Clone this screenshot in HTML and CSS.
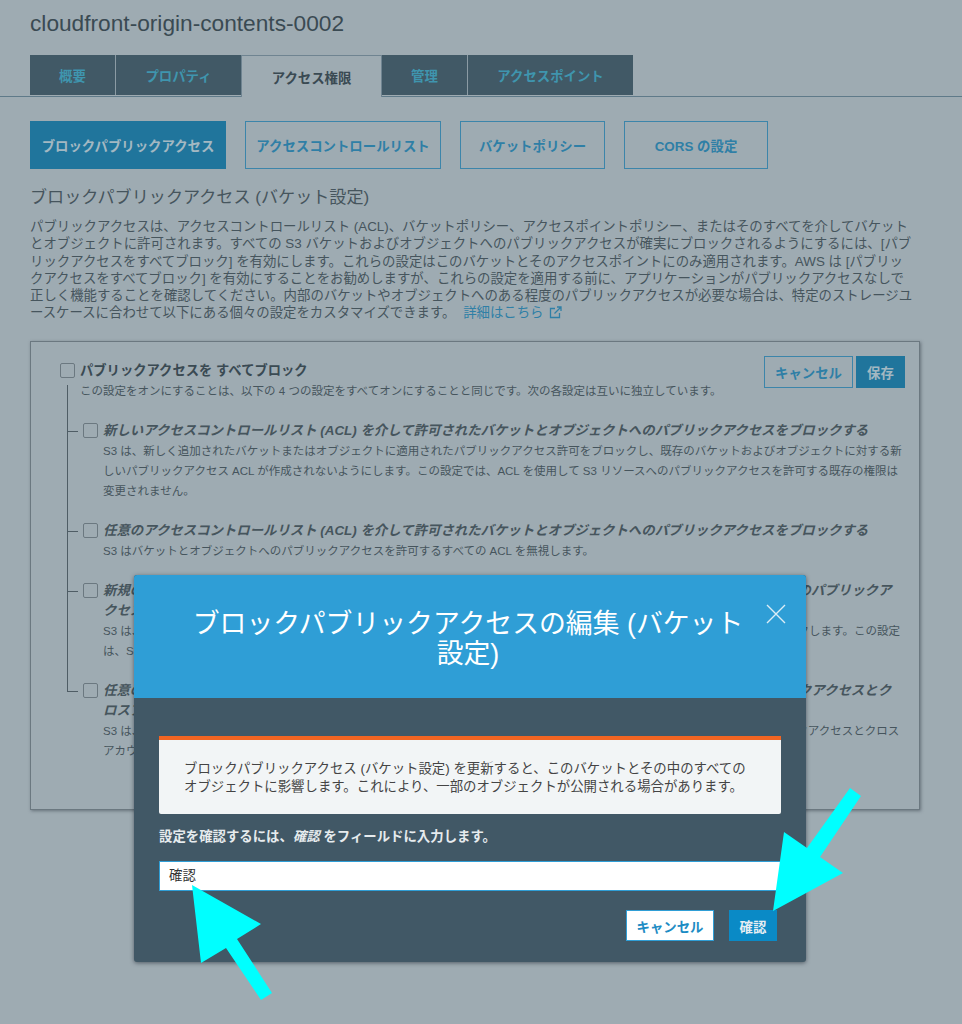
FILE: index.html
```html
<!DOCTYPE html>
<html lang="ja">
<head>
    <meta charset="UTF-8">
    <title>cloudfront-origin-contents-0002</title>
    <link rel="stylesheet" href="styles.css">
</head>
<body>

<h1 class="bucket-name">cloudfront-origin-contents-0002</h1>

<div class="tabs">
    <a class="tab tab-overview">概要</a>
    <a class="tab tab-props">プロパティ</a>
    <a class="tab tab-active">アクセス権限</a>
    <a class="tab tab-manage">管理</a>
    <a class="tab tab-points">アクセスポイント</a>
</div>

<div class="subnav">
    <a class="pill pill-active pill-block">ブロックパブリックアクセス</a>
    <a class="pill pill-acl">アクセスコントロールリスト</a>
    <a class="pill pill-policy">バケットポリシー</a>
    <a class="pill pill-cors">CORS の設定</a>
</div>

<h2 class="section-title">ブロックパブリックアクセス (バケット設定)</h2>
<p class="intro">
    パブリックアクセスは、アクセスコントロールリスト (ACL)、バケットポリシー、アクセスポイントポリシー、またはそのすべてを介してバケット<br>
    とオブジェクトに許可されます。すべての S3 バケットおよびオブジェクトへのパブリックアクセスが確実にブロックされるようにするには、[パブ<br>
    リックアクセスをすべてブロック] を有効にします。これらの設定はこのバケットとそのアクセスポイントにのみ適用されます。AWS は [パブリッ<br>
    クアクセスをすべてブロック] を有効にすることをお勧めしますが、これらの設定を適用する前に、アプリケーションがパブリックアクセスなしで<br>
    正しく機能することを確認してください。内部のバケットやオブジェクトへのある程度のパブリックアクセスが必要な場合は、特定のストレージユ<br>
    ースケースに合わせて以下にある個々の設定をカスタマイズできます。
    <a class="more-link">詳細はこちら
        <svg class="ext-icon" width="13" height="13" viewBox="0 0 13 13" fill="none" stroke="#2f7fa6" stroke-width="1.3">
            <path d="M6 2.5H1.5V11.5H10.5V7"/>
            <path d="M5.5 7.5L12 1M8 1H12V5"/>
        </svg>
    </a>
</p>

<div class="settings">
    <div class="top-row">
        <div class="top-text">
            <div class="row-head">
                <span class="check"></span>
                <span class="top-title">パブリックアクセスを すべてブロック</span>
            </div>
            <p class="top-desc">この設定をオンにすることは、以下の 4 つの設定をすべてオンにすることと同じです。次の各設定は互いに独立しています。</p>
        </div>
        <div class="top-actions">
            <a class="btn btn-outline">キャンセル</a>
            <a class="btn btn-save">保存</a>
        </div>
    </div>

    <div class="tree">
        <div class="tree-row">
            <div class="row-head">
                <span class="check"></span>
                <span class="row-title">新しいアクセスコントロールリスト (ACL) を介して許可されたバケットとオブジェクトへのパブリックアクセスをブロックする</span>
            </div>
            <p class="row-desc">S3 は、新しく追加されたバケットまたはオブジェクトに適用されたパブリックアクセス許可をブロックし、既存のバケットおよびオブジェクトに対する新<br>しいパブリックアクセス ACL が作成されないようにします。この設定では、ACL を使用して S3 リソースへのパブリックアクセスを許可する既存の権限は<br>変更されません。</p>
        </div>
        <div class="tree-row">
            <div class="row-head">
                <span class="check"></span>
                <span class="row-title">任意のアクセスコントロールリスト (ACL) を介して許可されたバケットとオブジェクトへのパブリックアクセスをブロックする</span>
            </div>
            <p class="row-desc">S3 はバケットとオブジェクトへのパブリックアクセスを許可するすべての ACL を無視します。</p>
        </div>
        <div class="tree-row">
            <div class="row-head">
                <span class="check"></span>
                <span class="row-title">新規のパブリックバケットポリシーまたはアクセスポイントポリシーを介して許可されたバケットとオブジェクトへのパブリックア<br>クセスをブロックする</span>
            </div>
            <p class="row-desc">S3 は、バケットとオブジェクトへのパブリックアクセスを許可する新しいバケットポリシーおよびアクセスポイントポリシーをブロックします。この設定<br>は、S3 リソースへのパブリックアクセスを許可する既存のポリシーは変更しません。</p>
        </div>
        <div class="tree-row">
            <div class="row-head">
                <span class="check"></span>
                <span class="row-title">任意のパブリックバケットポリシーまたはアクセスポイントポリシーを介したバケットとオブジェクトへのパブリックアクセスとク<br>ロスアカウントアクセスをブロックする</span>
            </div>
            <p class="row-desc">S3 は、バケットとオブジェクトへのパブリックアクセスを許可するポリシーを持つバケットやアクセスポイントへのすべてのパブリックアクセスとクロス<br>アカウントアクセスを無視します。</p>
        </div>
    </div>
</div>

<div class="modal">
    <div class="modal-head">
        <h3 class="modal-title">ブロックパブリックアクセスの編集 (バケット設定)</h3>
        <svg class="modal-close" width="20" height="20" viewBox="0 0 20 20" stroke="#dcedf6" stroke-width="1.4">
            <path d="M1 1L19 19M19 1L1 19"/>
        </svg>
    </div>
    <div class="modal-body">
        <div class="alert">ブロックパブリックアクセス (バケット設定) を更新すると、このバケットとその中のすべての<br>オブジェクトに影響します。これにより、一部のオブジェクトが公開される場合があります。</div>
        <p class="confirm-label">設定を確認するには、<em>確認</em> をフィールドに入力します。</p>
        <div class="confirm-input">確認</div>
        <div class="modal-actions">
            <a class="btn-modal btn-modal-cancel">キャンセル</a>
            <a class="btn-modal btn-modal-ok">確認</a>
        </div>
    </div>
</div>

<svg class="arrows" width="962" height="1024" viewBox="0 0 962 1024" fill="#00ffff">
    <polygon points="192,885 261,924 237,939 272,993 261,1000 226,948 201,963"/>
    <polygon points="773,911 784,832 807,848 850,788 861,796 820,857 843,873"/>
</svg>

</body>
</html>
```

FILE: styles.css
```css
body {
    font-family: "Liberation Sans", "Noto Sans CJK JP", sans-serif;
    position: relative;
    height: 1024px;
    margin: 0;
    overflow: hidden;
    background-color: #9eabb2;
    color: #46555d;
}
.bucket-name {
    margin: 0;
    padding: 12px 0 0 30px;
    height: 55px;
    box-sizing: border-box;
    font-size: 22.7px;
    line-height: 23px;
    font-weight: normal;
    color: #3a4a53;
}
.tabs {
    display: flex;
    height: 42px;
    box-sizing: border-box;
    padding-left: 30px;
    border-bottom: 1px solid #5f7a89;
}
.tab {
    display: flex;
    justify-content: center;
    align-items: center;
    box-sizing: border-box;
    height: 40px;
    border-left: 1px solid #8b9ba4;
    background-color: #415966;
    color: #3f95ae;
    font-size: 13.4px;
    font-weight: bold;
}
.tab-overview { width: 85px; border-left: none; }
.tab-props { width: 126px; }
.tab-active {
    width: 141px;
    height: 42px;
    background-color: #9eabb2;
    border: 1px solid #6f8491;
    border-bottom: none;
    color: #3a4a53;
}
.tab-manage { width: 85px; border-left: none; }
.tab-points { width: 166px; }
.subnav {
    display: flex;
    padding: 24px 0 0 30px;
}
.pill {
    display: flex;
    justify-content: center;
    align-items: center;
    box-sizing: border-box;
    height: 48px;
    border: 1px solid #3c85aa;
    color: #2f7fa6;
    font-size: 13.4px;
    font-weight: bold;
}
.pill-active {
    background-color: #20759c;
    border-color: #20759c;
    color: #a3b8c2;
}
.pill-block { width: 196px; margin-right: 19px; }
.pill-acl { width: 196px; margin-right: 19px; }
.pill-policy { width: 145px; margin-right: 19px; }
.pill-cors { width: 144px; }
.section-title {
    margin: 18px 0 0 30px;
    font-size: 17.1px;
    line-height: 22px;
    font-weight: normal;
    color: #46555d;
}
.intro {
    margin: 9px 0 0 30px;
    font-size: 13.4px;
    line-height: 17.3px;
    white-space: nowrap;
    color: #46555d;
}
.more-link {
    margin-left: 4px;
    color: #2f7fa6;
}
.ext-icon {
    margin-left: 2px;
    vertical-align: -2px;
}
.settings {
    box-sizing: border-box;
    width: 890px;
    height: 469px;
    margin: 19px 0 0 30px;
    padding: 14px 14px 0 29px;
    border: 1px solid #6b7880;
    box-shadow: 1px 1px 3px rgba(50, 60, 70, 0.5);
}
.top-row {
    display: flex;
    justify-content: space-between;
}
.top-text {
    padding-top: 5px;
}
.row-head {
    display: flex;
    align-items: center;
    min-height: 20px;
}
.check {
    flex-shrink: 0;
    box-sizing: border-box;
    width: 15px;
    height: 15px;
    margin-right: 5px;
    border: 1px solid #6b7880;
    border-radius: 2px;
}
.top-title {
    font-size: 13.3px;
    font-weight: bold;
    line-height: 20px;
    color: #3a4a53;
}
.top-desc {
    margin: 0 0 0 20px;
    font-size: 11.5px;
    line-height: 20px;
}
.top-actions {
    display: flex;
    gap: 3px;
}
.btn {
    display: flex;
    justify-content: center;
    align-items: center;
    box-sizing: border-box;
    height: 32px;
    font-size: 13.4px;
    font-weight: bold;
}
.btn-outline {
    width: 89px;
    border: 1px solid #3c85aa;
    color: #2f7fa6;
}
.btn-save {
    width: 49px;
    background-color: #20759c;
    color: #a3b8c2;
}
.tree {
    margin: 20px 0 0 7px;
}
.tree-row {
    position: relative;
    padding: 0 0 20px 16px;
}
.tree-row::before {
    content: "";
    position: absolute;
    left: 0;
    top: 0;
    bottom: 0;
    border-left: 1px solid #4f5d65;
}
.tree-row:first-child::before {
    top: -36px;
}
.tree-row:last-child::before {
    bottom: auto;
    height: 10px;
}
.tree-row::after {
    content: "";
    position: absolute;
    left: 0;
    top: 10px;
    width: 11px;
    border-top: 1px solid #4f5d65;
}
.row-head .row-title {
    font-size: 13.4px;
    font-weight: bold;
    font-style: italic;
    line-height: 20px;
    white-space: nowrap;
    color: #46555d;
}
.row-head:has(.row-title) {
    align-items: flex-start;
}
.row-head:has(.row-title) .check {
    margin-top: 2px;
}
.row-desc {
    margin: 0 0 0 20px;
    font-size: 11.5px;
    line-height: 20px;
    white-space: nowrap;
}
.modal {
    position: absolute;
    left: 134px;
    top: 575px;
    width: 672px;
    height: 387px;
    border-radius: 3px;
    background-color: #415866;
    box-shadow: 0 1px 4px rgba(30, 40, 50, 0.6);
}
.modal-head {
    position: relative;
    box-sizing: border-box;
    height: 123px;
    padding: 34px 59px 0 55px;
    background-color: #2f9ed6;
    border-radius: 3px 3px 0 0;
}
.modal-title {
    margin: 0;
    text-align: center;
    font-size: 26.85px;
    line-height: 30px;
    font-weight: normal;
    color: #fff;
}
.modal-close {
    position: absolute;
    right: 20px;
    top: 29px;
}
.modal-body {
    padding: 38px 25px 0;
}
.alert {
    box-sizing: border-box;
    height: 78px;
    padding: 20px 25px 0;
    border-top: 4px solid #f26522;
    background-color: #f2f5f6;
    border-radius: 0 0 2px 2px;
    font-size: 13.4px;
    line-height: 17.5px;
    white-space: nowrap;
    color: #444;
}
.confirm-label {
    margin: 14px 0 0;
    font-size: 13.4px;
    line-height: 18px;
    font-weight: bold;
    color: #e6ebee;
}
.confirm-input {
    box-sizing: border-box;
    height: 30px;
    margin-top: 15px;
    padding: 0 9px;
    border: 1px solid #2f9ed6;
    background-color: #fff;
    font-size: 13.4px;
    line-height: 28px;
    color: #333;
}
.modal-actions {
    display: flex;
    justify-content: flex-end;
    gap: 15px;
    margin-top: 19px;
    padding-right: 4px;
}
.btn-modal {
    display: flex;
    justify-content: center;
    align-items: center;
    box-sizing: border-box;
    height: 31px;
    font-size: 13.4px;
    font-weight: bold;
}
.btn-modal-cancel {
    width: 88px;
    border: 1px solid #2f9ed6;
    background-color: #fff;
    color: #1d8cc4;
}
.btn-modal-ok {
    width: 48px;
    background-color: #0a8ac6;
    color: #e6eef3;
}
.arrows {
    position: absolute;
    left: 0;
    top: 0;
}
```
